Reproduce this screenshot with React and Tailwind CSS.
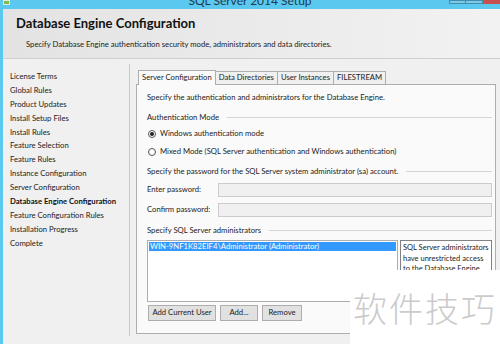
import React from 'react';

const navItems = [
  'License Terms',
  'Global Rules',
  'Product Updates',
  'Install Setup Files',
  'Install Rules',
  'Feature Selection',
  'Feature Rules',
  'Instance Configuration',
  'Server Configuration',
  'Database Engine Configuration',
  'Feature Configuration Rules',
  'Installation Progress',
  'Complete',
];

const tabs = ['Server Configuration', 'Data Directories', 'User Instances', 'FILESTREAM'];

const GroupLabel = ({ children, className = '' }) => (
  <div className={`flex items-center gap-2 shrink-0 ${className}`}>
    <span className="whitespace-nowrap">{children}</span>
    <div className="flex-1 h-px bg-[#d5d5d5]" />
  </div>
);

const Radio = ({ checked, label }) => (
  <div className="flex items-center gap-[4px] h-[18px]">
    <div className="w-[8px] h-[8px] rounded-full border border-[#555] bg-white flex items-center justify-center">
      {checked && <div className="w-[4px] h-[4px] rounded-full bg-[#222]" />}
    </div>
    <span>{label}</span>
  </div>
);

const Btn = ({ children, w }) => (
  <div className={`${w} h-[16px] border border-[#adadad] bg-[#e1e1e1] flex items-center justify-center`}>
    {children}
  </div>
);

export default function App() {
  return (
    <div
      className="w-[500px] h-[344px] relative overflow-hidden bg-[#f0f0f0] flex flex-col text-[#222] text-[7.7px]"
      style={{ fontFamily: 'Lato, "Open Sans", sans-serif' }}
    >
      {/* title bar */}
      <div className="h-[9px] bg-[#5bc8ef] relative overflow-hidden shrink-0">
        <div className="absolute left-[3px] top-[0px] w-[7px] h-[5px] bg-[#7cbf4a] border border-[#e6e6e6]" />
        <div className="absolute left-0 right-0 top-[-6px] text-center text-[12px] leading-[14px] text-[#1d3b4d]">
          SQL Server 2014 Setup
        </div>
        <div className="absolute right-0 top-0 flex h-[4px]">
          <div className="w-[17px] h-full bg-[#7fc9e6] border border-[#3d8fb0]" />
          <div className="w-[17px] h-full bg-[#7fc9e6] border border-[#3d8fb0] border-l-0" />
          <div className="w-[17px] h-full bg-[#c75050]" />
        </div>
      </div>

      <div className="flex-1 flex flex-col border-l-[3px] border-[#5bc8ef] min-h-0">
        {/* header */}
        <div className="h-[50px] shrink-0 bg-gradient-to-r from-[#e3e3e3] to-[#f2f2f2] border-b border-[#cfcfcf] pl-[13px] pt-[6px]">
          <div className="text-[13px] font-bold text-[#111] leading-[16px]">Database Engine Configuration</div>
          <div className="mt-[8px] ml-[10px] leading-[10px]">
            Specify Database Engine authentication security mode, administrators and data directories.
          </div>
        </div>

        {/* body */}
        <div className="flex-1 flex min-h-0 pt-[5px]">
          <div className="w-[127px] shrink-0 border-r border-[#c8c8c8] mb-[8px] pl-[7px] pt-[6px]">
            {navItems.map((n) => (
              <div
                key={n}
                className={`h-[13.9px] leading-[13.9px] whitespace-nowrap ${n === 'Database Engine Configuration' ? 'font-bold text-[#111]' : ''}`}
              >
                {n}
              </div>
            ))}
          </div>

          <div className="flex-1 pl-[6px] pr-[4px] pt-[5px] pb-[10px] flex flex-col min-h-0">
            {/* tabs */}
            <div className="flex items-end h-[15px] pl-[2px] shrink-0">
              {tabs.map((t, i) => (
                <div
                  key={t}
                  className={
                    i === 0
                      ? 'h-[15px] px-[3px] bg-[#fafafa] border border-[#adadad] border-b-0 flex items-center relative z-10 -mb-px'
                      : 'h-[13px] px-[3px] bg-[#f0f0f0] border border-[#adadad] border-b-0 border-l-0 flex items-center'
                  }
                >
                  {t}
                </div>
              ))}
            </div>
            <div className="flex-1 bg-[#fafafa] border border-[#adadad] pl-[10px] pr-[3px] pt-[6px] flex flex-col min-h-0">
              <div className="h-[13px] leading-[13px] shrink-0">
                Specify the authentication and administrators for the Database Engine.
              </div>
              <GroupLabel className="mt-[7px] h-[13px]">Authentication Mode</GroupLabel>
              <div className="pl-[1px] mt-[1px] shrink-0">
                <Radio checked label="Windows authentication mode" />
                <Radio label="Mixed Mode (SQL Server authentication and Windows authentication)" />
              </div>
              <GroupLabel className="mt-[4px] h-[13px]">
                Specify the password for the SQL Server system administrator (sa) account.
              </GroupLabel>
              <div className="flex items-center mt-[5px] h-[14px] shrink-0">
                <span className="w-[71px]">Enter password:</span>
                <div className="flex-1 h-[14px] bg-[#f0f0f0] border border-[#cccccc]" />
              </div>
              <div className="flex items-center mt-[6px] h-[14px] shrink-0">
                <span className="w-[71px]">Confirm password:</span>
                <div className="flex-1 h-[14px] bg-[#f0f0f0] border border-[#cccccc]" />
              </div>
              <GroupLabel className="mt-[7px] h-[13px]">Specify SQL Server administrators</GroupLabel>
              <div className="flex mt-[3px] gap-[2px] shrink-0">
                <div className="w-[251px] h-[62px] bg-white border border-[#adadad] p-px">
                  <div className="h-[9px] bg-[#3399ff] text-white leading-[9px] pl-[1px]">
                    WIN-9NF1K82EIF4\Administrator (Administrator)
                  </div>
                </div>
                <div className="flex-1 h-[62px] bg-white border border-[#828282] px-[2px] pt-[2px] leading-[10.5px] text-[7.5px]">
                  SQL Server administrators have unrestricted access to the Database Engine.
                </div>
              </div>
              <div className="flex gap-[4px] mt-[3px] pl-[1px] shrink-0">
                <Btn w="w-[68px]">Add Current User</Btn>
                <Btn w="w-[38px]">Add...</Btn>
                <Btn w="w-[40px]">Remove</Btn>
              </div>
            </div>
          </div>
        </div>
      </div>

      {/* watermark */}
      <div
        className="absolute left-[350px] top-[270px] w-[150px] h-[74px] bg-white flex items-center justify-center text-[34px] font-light text-[#cbcbcb] tracking-[2px]"
        style={{ fontFamily: '"Noto Sans CJK SC", sans-serif' }}
      >
        软件技巧
      </div>
    </div>
  );
}
